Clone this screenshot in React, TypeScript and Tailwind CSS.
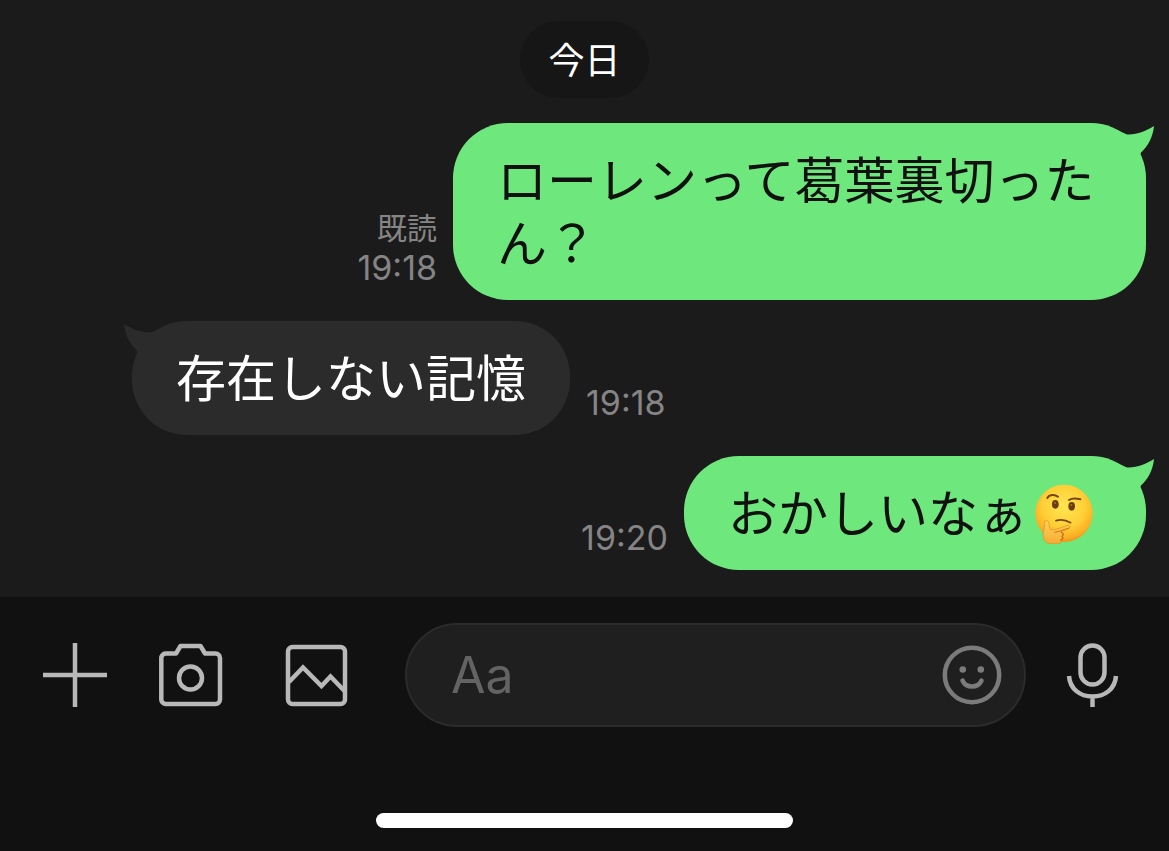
import type { ReactNode, SVGProps } from "react";

type Message = {
    id: number;
    mine: boolean;
    time: string;
    read?: boolean;
    text: string;
    emoji?: boolean;
};

const messages: Message[] = [
    { id: 1, mine: true, time: "19:18", read: true, text: "ローレンって葛葉裏切ったん？" },
    { id: 2, mine: false, time: "19:18", text: "存在しない記憶" },
    { id: 3, mine: true, time: "19:20", text: "おかしいなぁ", emoji: true },
];

const Icon = ({ children, ...props }: SVGProps<SVGSVGElement>) => (
    <svg
        width="64"
        height="64"
        viewBox="0 0 64 64"
        fill="none"
        stroke="currentColor"
        strokeWidth="4.5"
        aria-hidden="true"
        {...props}
    >
        {children}
    </svg>
);

const PlusIcon = () => (
    <Icon>
        <path d="M32 0v64M0 32h64" />
    </Icon>
);

const CameraIcon = () => (
    <Icon strokeLinejoin="round">
        <path d="M6.500 10.500H17L21.500 3H41.500L46 10.500H56.500A4.500 4.500 0 0 1 61 15V56.500A4.500 4.500 0 0 1 56.500 61H6.500A4.500 4.500 0 0 1 2.300 56.500V15A4.500 4.500 0 0 1 6.500 10.500Z" />
        <circle cx="31.500" cy="35" r="11.500" />
    </Icon>
);

const PhotoIcon = () => (
    <Icon>
        <rect x="3" y="4" width="57" height="57" rx="4.5" />
        <path d="M4 39L18 24.500L36.500 43L45.500 33.500L60 48.500" />
    </Icon>
);

const MicIcon = () => (
    <Icon>
        <rect x="20.500" y="2.500" width="24" height="39" rx="12" />
        <path d="M9 33C10 46 20 53.500 32.500 53.500S55 46 56 33M32.500 53V65" />
    </Icon>
);

const SmileIcon = () => (
    <Icon width="60" height="60" viewBox="0 0 60 60">
        <circle cx="30" cy="30" r="27.2" />
        <circle cx="20.800" cy="24.500" r="3.300" fill="currentColor" stroke="none" />
        <circle cx="38.800" cy="24.500" r="3.300" fill="currentColor" stroke="none" />
        <path d="M20.500 35.500C24 43.500 36 43.500 39.500 35.500" strokeLinecap="round" />
    </Icon>
);

const ThinkingFace = () => (
    <svg
        className="mx-[7px] inline-block size-[60px] align-[-12px]"
        viewBox="0 0 180 180"
        fill="none"
        strokeLinecap="round"
        role="img"
        aria-label="🤔"
    >
        <defs>
            <radialGradient id="face" cx="0.5" cy="0.38" r="0.62">
                <stop offset="0" stopColor="#ffe551" />
                <stop offset="0.6" stopColor="#ffcf36" />
                <stop offset="0.88" stopColor="#fbaf24" />
                <stop offset="1" stopColor="#ee9519" />
            </radialGradient>
            <linearGradient id="hand" x1="0" y1="0" x2="0" y2="1">
                <stop offset="0" stopColor="#ffd25a" />
                <stop offset="1" stopColor="#f7ab35" />
            </linearGradient>
        </defs>
        <circle cx="87" cy="88" r="86" fill="url(#face)" />
        <ellipse cx="61" cy="61" rx="10" ry="13" fill="#6b3d0c" />
        <ellipse cx="110" cy="67" rx="10" ry="13" fill="#6b3d0c" />
        <circle cx="60" cy="57" r="3" fill="#a8702a" />
        <circle cx="109" cy="63" r="3" fill="#a8702a" />
        <path d="M37 42C42 31 59 30 69 38" stroke="#7a450c" strokeWidth="6" />
        <path d="M102 48C112 42 123 43 136 46" stroke="#7a450c" strokeWidth="6" />
        <path d="M63 110C76 106 93 108 107 116" stroke="#7a450c" strokeWidth="5" />
        {/* Hand resting on the chin */}
        <path
            d="M30 112C34 106 42 110 42 119C43 127 44 133 48 138C64 138 82 129 97 124C105 122 108 130 101 134L78 144C86 145 87 154 82 157C86 162 84 168 78 169C80 175 75 179 67 179C49 181 32 179 27 166C22 153 26 142 28 132C30 124 26 118 30 112Z"
            fill="url(#hand)"
            stroke="#e58a1b"
            strokeWidth="2"
        />
        <path d="M59 145C73 143 88 136 102 132" stroke="#d5740f" strokeWidth="3" />
        <path d="M79 145C87 148 86 155 80 157C86 161 84 167 77 168" stroke="#a8560d" strokeWidth="3" />
    </svg>
);

const Tail = ({ mine }: { mine: boolean }) => (
    <svg
        className={
            mine
                ? "absolute top-0 -right-2 h-8 w-10 text-[#6ee87d]"
                : "absolute top-0 -left-2 h-8 w-10 -scale-x-100 text-[#2b2b2b]"
        }
        viewBox="0 0 40 32"
        fill="currentColor"
        aria-hidden="true"
    >
        <path d="M4 7.500L13 11.500C23 12 32 8 40 3C39 14 34 23 27 29.500L26 32H4Z" />
    </svg>
);

const Bubble = ({ mine, children }: { mine: boolean; children: ReactNode }) => (
    <div
        className={
            mine
                ? "relative max-w-[693px] rounded-[55px] bg-[#6ee87d] px-11 pt-[27px] pb-6 text-[50px] leading-[63px] text-[#111111]"
                : "relative max-w-[693px] rounded-[55px] bg-[#2b2b2b] px-11 pt-[27px] pb-6 text-[50px] leading-[63px] text-white"
        }
    >
        <Tail mine={mine} />
        <p className="break-all">{children}</p>
    </div>
);

const MessageRow = ({ message }: { message: Message }) => (
    <li
        className={
            message.mine
                ? "flex flex-row-reverse items-end gap-4"
                : "flex items-end gap-4 pl-[109px]"
        }
    >
        <Bubble mine={message.mine}>
            {message.text}
            {message.emoji && <ThinkingFace />}
        </Bubble>
        <div className="shrink-0 pb-3 text-right leading-10 text-[#858585]">
            {message.read && <div className="text-[30px]">既読</div>}
            <time className="block text-[34px]">{message.time}</time>
        </div>
    </li>
);

export default function App() {
    return (
        <div className="flex min-h-screen flex-col bg-[#1b1b1b] font-['Inter','Noto_Sans_CJK_JP',sans-serif]">
            <main className="flex-1 px-[23px] pt-[21px] pb-[27px]">
                <div className="mx-auto w-fit rounded-full bg-[#161616] px-7 pt-[18px] pb-[14px] text-4xl leading-[45px] text-white">
                    今日
                </div>
                <ul className="mt-[25px] flex flex-col gap-[21px]">
                    {messages.map((message) => (
                        <MessageRow key={message.id} message={message} />
                    ))}
                </ul>
            </main>

            <footer className="bg-[#111111] pt-[26px] pb-[23px]">
                <form className="flex items-center pr-[45px] pl-[43px] text-[#b8b8b8]">
                    <button type="button" aria-label="メニュー" className="shrink-0">
                        <PlusIcon />
                    </button>
                    <button type="button" aria-label="カメラ" className="ml-[52px] shrink-0">
                        <CameraIcon />
                    </button>
                    <button type="button" aria-label="写真" className="ml-[62px] shrink-0">
                        <PhotoIcon />
                    </button>
                    <div className="ml-14 flex h-[104px] min-w-0 flex-1 items-center rounded-full border-2 border-[#2b2b2b] bg-[#1f1f1f] pr-[22px] pl-11">
                        <input
                            type="text"
                            placeholder="Aa"
                            aria-label="メッセージ"
                            className="min-w-0 flex-1 bg-transparent text-[50px] leading-[64px] text-white outline-none placeholder:text-[#636363]"
                        />
                        <button type="button" aria-label="スタンプ" className="shrink-0 text-[#7b7b7b]">
                            <SmileIcon />
                        </button>
                    </div>
                    <button type="button" aria-label="ボイス" className="ml-[34px] shrink-0">
                        <MicIcon />
                    </button>
                </form>
                {/* Home indicator */}
                <div className="mx-auto mt-[86px] h-[15px] w-[417px] rounded-full bg-white" />
            </footer>
        </div>
    );
}
